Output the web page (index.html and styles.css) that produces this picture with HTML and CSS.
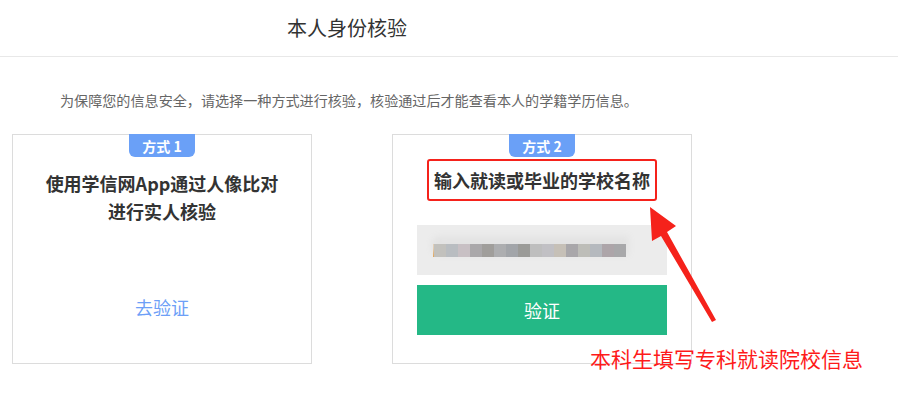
FILE: index.html
```html
<!DOCTYPE html>
<html lang="zh">
<head>
<meta charset="utf-8">
<link rel="stylesheet" href="styles.css">
</head>
<body>
<div class="page">
  <header class="head"><h1 class="head-title">本人身份核验</h1></header>
  <p class="intro">为保障您的信息安全，请选择一种方式进行核验，核验通过后才能查看本人的学籍学历信息。</p>
  <div class="cards">
    <div class="card">
      <div class="badge">方式 1</div>
      <div class="card-title">使用学信网App通过人像比对<br>进行实人核验</div>
      <a class="go-link">去验证</a>
    </div>
    <div class="card">
      <div class="badge">方式 2</div>
      <div class="card-title card-title-2"><span class="hl">输入就读或毕业的学校名称</span></div>
      <div class="school-input">
        <span class="caret"></span>
        <div class="blur">
          <span class="px" style="background:#c2c1bd"></span>
          <span class="px" style="background:#b9bdc1"></span>
          <span class="px" style="background:#c8c0c4"></span>
          <span class="px" style="background:#aaa8aa"></span>
          <span class="px" style="background:#a09e9b"></span>
          <span class="px" style="background:#adaeb0"></span>
          <span class="px" style="background:#a2a5a9"></span>
          <span class="px" style="background:#9b9b98"></span>
          <span class="px" style="background:#bebebe"></span>
          <span class="px" style="background:#c1c0c4"></span>
          <span class="px" style="background:#c6c0b7"></span>
          <span class="px" style="background:#a9a7aa"></span>
          <span class="px" style="background:#bdbdb8"></span>
          <span class="px" style="background:#b5b9be"></span>
          <span class="px" style="background:#ada5a9"></span>
          <span class="px" style="background:#a8a8aa"></span>
        </div>
      </div>
      <button class="verify-btn">验证</button>
    </div>
  </div>
  <svg class="arrow" width="898" height="411" viewBox="0 0 898 411">
    <polygon points="650,207 652,241 661,236 712,322 716,320 667,232 676,226" fill="#f5221b"/>
  </svg>
  <div class="note">本科生填写专科就读院校信息</div>
</div>
</body>
</html>
```
FILE: styles.css
```css
html, body {
  margin: 0;
  padding: 0;
  background: #fff;
}
body {
  font-family: "Noto Sans CJK SC", "Noto Sans", sans-serif;
  color: #333;
}
.page {
  position: relative;
  width: 898px;
  height: 411px;
  overflow: hidden;
}
.head {
  height: 57px;
  border-bottom: 1px solid #e8e8e8;
  box-sizing: border-box;
  padding-left: 287px;
  display: flex;
  align-items: center;
}
.head-title {
  margin: 0;
  font-size: 20px;
  font-weight: normal;
  color: #333;
  line-height: 1;
  padding-bottom: 1px;
}
.intro {
  margin: 33px 0 0 60px;
  font-size: 14.1px;
  line-height: 20px;
  color: #666;
}
.cards {
  display: flex;
  gap: 80px;
  padding-left: 12px;
  margin-top: 24px;
}
.card {
  width: 300px;
  height: 230px;
  box-sizing: border-box;
  border: 1px solid #dcdcdc;
  display: flex;
  flex-direction: column;
  align-items: center;
}
.badge {
  width: 66px;
  height: 23px;
  margin-top: -1px;
  background: #6aa0f7;
  color: #fff;
  font-size: 14px;
  font-weight: bold;
  line-height: 24px;
  text-align: center;
  border-radius: 0 0 6px 6px;
}
.card-title {
  margin-top: 12px;
  font-size: 18px;
  font-weight: bold;
  line-height: 28px;
  text-align: center;
  color: #333;
}
.go-link {
  margin-top: 72px;
  font-size: 18px;
  color: #6d9ff7;
  line-height: 20px;
}
.card-title-2 {
  margin-top: 2px;
}
.hl {
  display: inline-block;
  width: 230px;
  height: 42px;
  box-sizing: border-box;
  border: 2px solid #f5221b;
  border-radius: 3px;
  line-height: 38px;
  font-size: 18px;
  text-align: center;
  white-space: nowrap;
}
.school-input {
  margin-top: 24px;
  width: 250px;
  height: 50px;
  background: #ececec;
  display: flex;
  align-items: center;
  padding-left: 16px;
  box-sizing: border-box;
  position: relative;
}
.caret {
  width: 1px;
  height: 13px;
  background: #e0a050;
  margin-top: 1px;
}
.blur {
  display: flex;
  height: 13px;
  margin-top: 1px;
  box-shadow: 0 -5px 6px 3px #e3e3e3;
  border-radius: 6px 0 0 6px;
}
.px {
  width: 12px;
  height: 13px;
}
.verify-btn {
  margin-top: 10px;
  width: 250px;
  height: 50px;
  border: 0;
  background: #24b886;
  color: #fff;
  font-family: inherit;
  font-size: 18px;
  padding: 0;
}
.arrow {
  position: absolute;
  left: 0;
  top: 0;
  pointer-events: none;
}
.note {
  position: absolute;
  left: 590px;
  top: 345px;
  font-size: 21px;
  line-height: 26px;
  color: #fe1a1a;
}
```
